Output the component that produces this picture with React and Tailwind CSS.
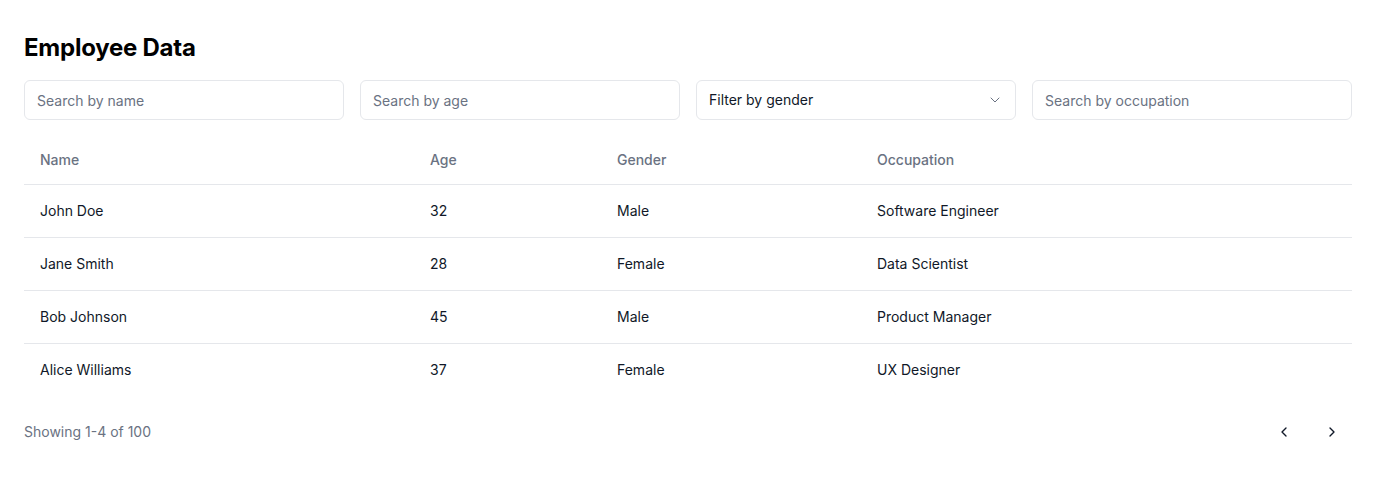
import React, { useState } from 'react'
import { ChevronDown, ChevronLeft, ChevronRight } from 'lucide-react'

const employees = [
  { id: 1, name: 'John Doe', age: 32, gender: 'Male', occupation: 'Software Engineer' },
  { id: 2, name: 'Jane Smith', age: 28, gender: 'Female', occupation: 'Data Scientist' },
  { id: 3, name: 'Bob Johnson', age: 45, gender: 'Male', occupation: 'Product Manager' },
  { id: 4, name: 'Alice Williams', age: 37, gender: 'Female', occupation: 'UX Designer' },
]

const inputClass =
  'h-10 w-full rounded-md border border-gray-200 bg-white px-3 text-sm text-gray-900 placeholder:text-gray-500 focus:outline-none'

const App = () => {
  const [name, setName] = useState('')
  const [age, setAge] = useState('')
  const [occupation, setOccupation] = useState('')

  return (
    <div className="min-h-screen bg-white px-6 pt-8 pb-6 text-gray-900" style={{ fontFamily: 'Inter, "Liberation Sans", sans-serif' }}>
      <h1 className="mb-4 text-2xl leading-8 font-bold tracking-[-0.01em] text-black">Employee Data</h1>

      {/* Filters */}
      <div className="mb-4 grid grid-cols-4 gap-4">
        <input
          type="text"
          value={name}
          onChange={(e) => setName(e.target.value)}
          placeholder="Search by name"
          className={inputClass}
        />
        <input
          type="text"
          value={age}
          onChange={(e) => setAge(e.target.value)}
          placeholder="Search by age"
          className={inputClass}
        />
        <button className="flex h-10 w-full items-center justify-between rounded-md border border-gray-200 bg-white px-3 text-sm text-gray-900">
          <span>Filter by gender</span>
          <ChevronDown className="h-4 w-4 text-gray-500" strokeWidth={1.5} />
        </button>
        <input
          type="text"
          value={occupation}
          onChange={(e) => setOccupation(e.target.value)}
          placeholder="Search by occupation"
          className={inputClass}
        />
      </div>

      {/* Table */}
      <table className="w-full text-sm">
        <thead>
          <tr className="border-b border-gray-200">
            <th className="h-12 w-[390px] px-4 text-left font-medium text-gray-500">Name</th>
            <th className="h-12 w-[187px] px-4 text-left font-medium text-gray-500">Age</th>
            <th className="h-12 w-[260px] px-4 text-left font-medium text-gray-500">Gender</th>
            <th className="h-12 px-4 text-left font-medium text-gray-500">Occupation</th>
          </tr>
        </thead>
        <tbody>
          {employees.map((emp, i) => (
            <tr key={emp.id} className={i < employees.length - 1 ? 'border-b border-gray-200' : ''}>
              <td className="p-4 leading-5">{emp.name}</td>
              <td className="p-4 leading-5">{emp.age}</td>
              <td className="p-4 leading-5">{emp.gender}</td>
              <td className="p-4 leading-5">{emp.occupation}</td>
            </tr>
          ))}
        </tbody>
      </table>

      {/* Footer */}
      <div className="mt-4 flex items-center justify-between">
        <p className="text-sm text-gray-500">Showing 1-4 of 100</p>
        <div className="flex gap-2">
          <button className="flex h-10 w-10 items-center justify-center rounded-md hover:bg-gray-100">
            <ChevronLeft className="h-4 w-4 text-gray-900" />
          </button>
          <button className="flex h-10 w-10 items-center justify-center rounded-md hover:bg-gray-100">
            <ChevronRight className="h-4 w-4 text-gray-900" />
          </button>
        </div>
      </div>
    </div>
  )
}

export default App
